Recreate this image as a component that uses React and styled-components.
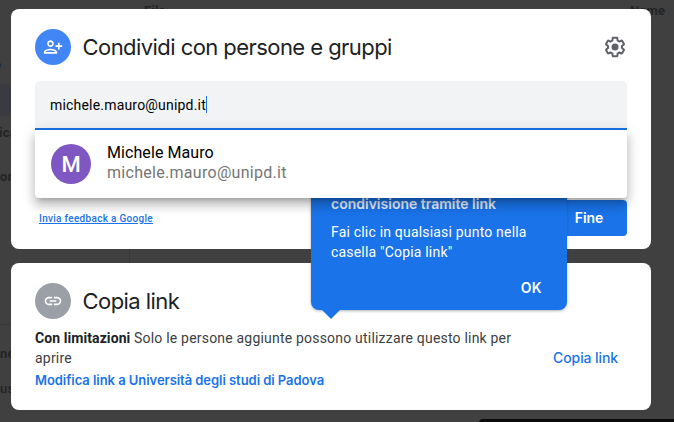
import React from "react";
import styled, { createGlobalStyle } from "styled-components";

const display = '"Inter", sans-serif';

const Global = createGlobalStyle`
  * { box-sizing: border-box; }
  body { margin: 0; font-family: "Roboto", sans-serif; overflow: hidden; background: #404040; }
  button { border: 0; background: none; padding: 0; cursor: pointer; }
`;

const Page = styled.main`
  position: relative;
  width: 674px;
  height: 422px;
  padding: 9px 23px 12px 11px;
  overflow: hidden;
  background: #404040;
  display: flex;
  flex-direction: column;
  gap: 14px;
`;

const Behind = styled.span`
  position: absolute;
  left: ${(p) => p.$x}px;
  top: ${(p) => p.$y}px;
  font: ${(p) => p.$weight || 700} 13px/16px "Roboto", sans-serif;
  letter-spacing: 0.2px;
  color: ${(p) => p.$color || "#222426"};
  white-space: nowrap;
`;

const Rule = styled.i`
  position: absolute;
  left: ${(p) => p.$x}px;
  top: ${(p) => p.$y}px;
  width: ${(p) => p.$w}px;
  height: ${(p) => p.$h}px;
  background: ${(p) => p.$color || "#383838"};
  border-radius: ${(p) => p.$radius || 0};
`;

const Card = styled.section`
  position: relative;
  height: ${(p) => p.$height}px;
  padding: 20px 24px 0;
  border-radius: 8px;
  background: #fff;
`;

const Header = styled.header`
  display: flex;
  align-items: center;
  height: 36px;
`;

const Badge = styled.div`
  display: grid;
  place-items: center;
  width: 36px;
  height: 36px;
  border-radius: 50%;
  background: ${(p) => p.$color};
  margin-right: 11.5px;
`;

const Title = styled.h1`
  margin: 0;
  flex: 1;
  font: 400 22px/28px ${display};
  letter-spacing: -0.56px;
  color: #202124;
  white-space: nowrap;
`;

const IconButton = styled.button`
  display: grid;
  width: 24px;
  height: 24px;
`;

const Field = styled.div`
  display: flex;
  align-items: center;
  height: 49px;
  margin-top: 16px;
  padding: 0 15px;
  border-radius: 5px 5px 0 0;
  border-bottom: 2px solid #1a73e8;
  background: #f1f3f4;
  font-size: 14px;
  letter-spacing: 0.19px;
  color: #000;
`;

const Caret = styled.i`
  width: 1px;
  height: 17px;
  background: #1a73e8;
`;

const Suggestion = styled.div`
  position: absolute;
  z-index: 3;
  left: 24px;
  right: 24px;
  top: 121px;
  height: 68px;
  padding: 0 16px;
  display: flex;
  align-items: center;
  gap: 16px;
  border-radius: 0 0 4px 4px;
  background: #fff;
  box-shadow: 0 5px 5px -3px rgba(0, 0, 0, 0.2), 0 8px 10px 1px rgba(0, 0, 0, 0.14),
    0 3px 14px 2px rgba(0, 0, 0, 0.12);
`;

const Avatar = styled.div`
  width: 40px;
  height: 40px;
  border-radius: 50%;
  background: #7e57c2;
  color: #fff;
  font: 500 22px/41px "Roboto", sans-serif;
  text-align: center;
`;

const Person = styled.div`
  padding-bottom: 2px;
  font-size: 16px;
  line-height: 20px;
  letter-spacing: 0.08px;
  color: #000;
`;

const Email = styled.div`
  letter-spacing: 0.29px;
  color: #757575;
`;

const Footer = styled.footer`
  display: flex;
  justify-content: space-between;
  margin-top: 70px;
  align-items: center;
  padding-left: 4px;
`;

const Feedback = styled.a`
  padding-top: 2px;
  font: 500 10px/14px "Roboto", sans-serif;
  letter-spacing: 0.3px;
  color: #1a73e8;
  text-decoration: underline;
`;

const DoneButton = styled.button`
  width: 76px;
  height: 36px;
  border-radius: 4px;
  background: #1a73e8;
  color: #fff;
  font: 600 14px/36px ${display};
  letter-spacing: -0.1px;
`;

const Tip = styled.aside`
  position: absolute;
  z-index: 2;
  left: 311px;
  top: 170px;
  width: 256px;
  height: 140px;
  padding: 24px 20px 0;
  border-radius: 8px;
  background: #1a73e8;
  color: #fff;
  font-size: 14px;
  line-height: 20px;
  letter-spacing: 0.19px;
  box-shadow: 0 1px 3px rgba(60, 64, 67, 0.4);

  &::after {
    content: "";
    position: absolute;
    left: 11px;
    top: 140px;
    border: 9px solid transparent;
    border-top-color: #1a73e8;
    border-bottom: 0;
  }
`;

const TipTitle = styled.h2`
  margin: 0 0 8px;
  font: 600 14px/20px ${display};
  letter-spacing: 0;
  color: #e8f0fe;
`;

const TipText = styled.p`
  margin: 0;
  white-space: nowrap;
`;

const TipAction = styled.button`
  display: block;
  margin: 16px 5px 0 auto;
  font: 600 14px/20px ${display};
  letter-spacing: 0.3px;
  color: #fff;
`;

const LinkBody = styled.div`
  display: flex;
  justify-content: space-between;
  align-items: flex-start;
  margin-top: 9px;
  padding-right: 9px;
  font-size: 14px;
  line-height: 20px;
  color: #3c4043;
`;

const Access = styled.p`
  margin: 0;
  width: 490px;
  letter-spacing: 0.2px;

  b {
    color: #202124;
    font-weight: 700;
    letter-spacing: 0.08px;
  }
`;

const TextLink = styled.button`
  display: block;
  font: ${(p) => p.$weight || 500} ${(p) => p.$size || 14}px/20px ${display};
  letter-spacing: ${(p) => p.$spacing || 0}px;
  color: #1a73e8;
  white-space: nowrap;
  margin-top: ${(p) => p.$top || 0}px;
`;

const Icon = ({ size, color, children }) => (
  <svg width={size} height={size} viewBox="0 0 24 24" fill={color}>{children}</svg>
);

export default function App() {
  return (
    <>
      <Global />
      <Page>
        <Behind $x={144} $y={3}>File</Behind>
        <Behind $x={630} $y={3}>Name</Behind>
        <Behind $x={-6} $y={57} $color="#17233a">e</Behind>
        <Rule $x={0} $y={84} $w={11} $h={32} $color="#393b40" />
        <Behind $x={-1} $y={125}>ica</Behind>
        <Behind $x={0} $y={169}>or</Behind>
        <Rule $x={129} $y={249} $w={1} $h={14} />
        <Rule $x={0} $y={324} $w={11} $h={1} />
        <Behind $x={0} $y={346}>ne</Behind>
        <Behind $x={0} $y={381} $weight={500}>us</Behind>
        <Rule $x={479} $y={419} $w={200} $h={8} $color="#0b0b0b" $radius="4px" />

        <Card $height={240}>
          <Header>
            <Badge $color="#4285f4">
              <Icon size={20} color="#fff">
                <path d="M13 8c0-2.21-1.79-4-4-4S5 5.79 5 8s1.79 4 4 4 4-1.79 4-4zm-2 0c0 1.1-.9 2-2 2s-2-.9-2-2 .9-2 2-2 2 .9 2 2zM1 18v2h16v-2c0-2.66-5.33-4-8-4s-8 1.34-8 4zm2 0c.2-.71 3.3-2 6-2 2.69 0 5.78 1.28 6 2H3zm17-3v-3h3v-2h-3V7h-2v3h-3v2h3v3h2z" />
              </Icon>
            </Badge>
            <Title>Condividi con persone e gruppi</Title>
            <IconButton aria-label="Impostazioni">
              <Icon size={24} color="#5f6368">
                <path d="M13.85 22.25h-3.7c-.74 0-1.36-.54-1.45-1.27l-.27-1.89c-.27-.14-.53-.29-.79-.46l-1.8.72c-.7.26-1.47-.03-1.81-.65L2.2 15.53c-.35-.66-.2-1.44.36-1.88l1.53-1.19c-.01-.15-.02-.3-.02-.46 0-.15.01-.31.02-.46l-1.52-1.19c-.59-.45-.74-1.26-.37-1.88l1.85-3.19c.34-.62 1.11-.9 1.79-.63l1.81.73c.26-.17.52-.32.78-.46l.27-1.91c.09-.7.71-1.25 1.44-1.25h3.7c.74 0 1.36.54 1.45 1.27l.27 1.89c.27.14.53.29.79.46l1.8-.72c.71-.26 1.48.03 1.82.65l1.84 3.18c.36.66.2 1.44-.36 1.88l-1.52 1.19c.01.15.02.3.02.46s-.01.31-.02.46l1.52 1.19c.56.45.72 1.23.37 1.86l-1.86 3.22c-.34.62-1.11.9-1.8.63l-1.8-.72c-.26.17-.52.32-.78.46l-.27 1.91c-.1.68-.72 1.22-1.46 1.22zm-3.23-2h2.76l.37-2.55.53-.22c.44-.18.88-.44 1.34-.78l.45-.34 2.38.96 1.38-2.4-2.03-1.58.07-.56c.03-.26.06-.51.06-.78s-.03-.53-.06-.78l-.07-.56 2.03-1.58-1.39-2.4-2.39.96-.45-.35c-.42-.32-.87-.58-1.33-.77l-.52-.22-.37-2.55h-2.76l-.37 2.55-.53.21c-.44.19-.88.44-1.34.79l-.45.33-2.38-.95-1.39 2.39 2.03 1.58-.07.56a7 7 0 0 0-.06.79c0 .26.02.53.06.78l.07.56-2.03 1.58 1.38 2.4 2.39-.96.45.35c.43.33.86.58 1.33.77l.53.22.38 2.55z" />
                <circle cx="12" cy="12" r="3.5" />
              </Icon>
            </IconButton>
          </Header>
          <Field>
            <span>michele.mauro@unipd.it</span>
            <Caret />
          </Field>
          <Suggestion>
            <Avatar>M</Avatar>
            <Person>
              Michele Mauro
              <Email>michele.mauro@unipd.it</Email>
            </Person>
          </Suggestion>
          <Footer>
            <Feedback>Invia feedback a Google</Feedback>
            <DoneButton>Fine</DoneButton>
          </Footer>
        </Card>

        <Tip>
          <TipTitle>condivisione tramite link</TipTitle>
          <TipText>Fai clic in qualsiasi punto nella<br />casella "Copia link"</TipText>
          <TipAction>OK</TipAction>
        </Tip>

        <Card $height={147}>
          <Header>
            <Badge $color="#9aa0a6">
              <Icon size={20} color="#fff">
                <path d="M3.9 12c0-1.71 1.39-3.1 3.1-3.1h4V7H7c-2.76 0-5 2.24-5 5s2.24 5 5 5h4v-1.9H7c-1.71 0-3.1-1.39-3.1-3.1zM8 13h8v-2H8v2zm9-6h-4v1.9h4c1.71 0 3.1 1.39 3.1 3.1s-1.39 3.1-3.1 3.1h-4V17h4c2.76 0 5-2.24 5-5s-2.24-5-5-5z" />
              </Icon>
            </Badge>
            <Title>Copia link</Title>
          </Header>
          <LinkBody>
            <div>
              <Access><b>Con limitazioni</b> Solo le persone aggiunte possono utilizzare questo link per aprire</Access>
              <TextLink $size={13} $weight={600} $spacing={-0.05} $top={2}>Modifica link a Università degli studi di Padova</TextLink>
            </div>
            <TextLink $top={20} $spacing={-0.1}>Copia link</TextLink>
          </LinkBody>
        </Card>
      </Page>
    </>
  );
}
